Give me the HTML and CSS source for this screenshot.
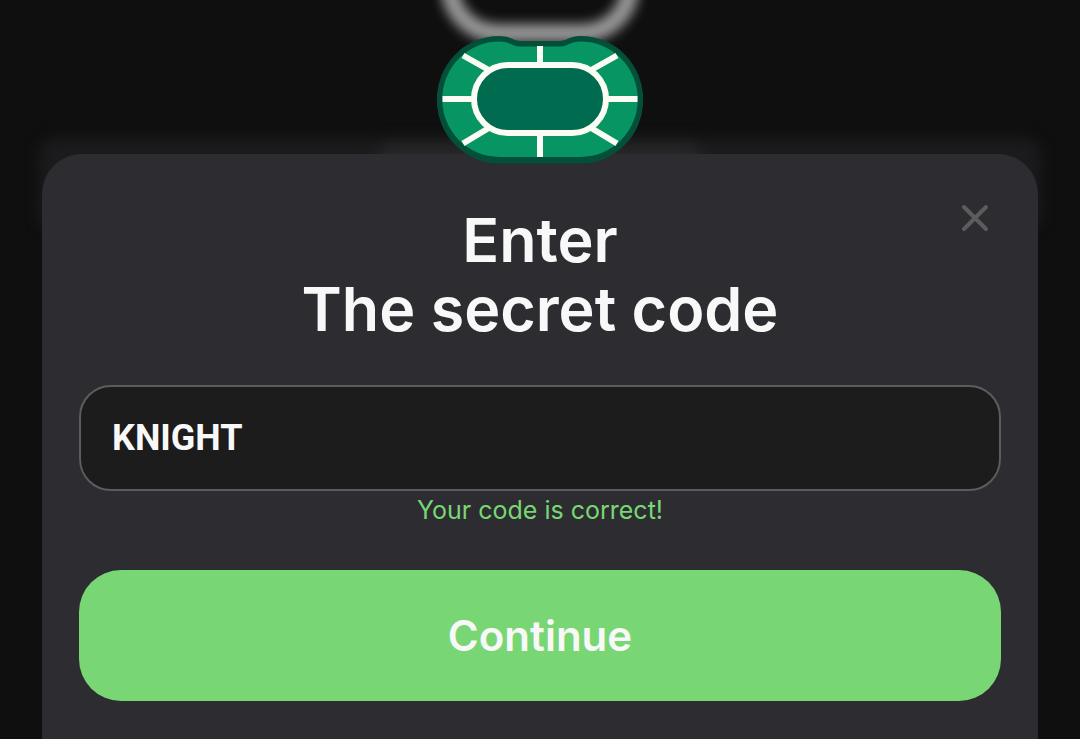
FILE: index.html
```html
<!DOCTYPE html>
<html lang="en">
<head>
    <meta charset="UTF-8">
    <meta name="viewport" content="width=device-width, initial-scale=1.0">
    <title>Enter the secret code</title>
    <link rel="stylesheet" href="styles.css">
</head>
<body>
    <!-- blurred page behind the modal -->
    <div class="backdrop" aria-hidden="true">
        <div class="backdrop-ring"></div>
        <div class="backdrop-panel">
            <div class="backdrop-tab"></div>
        </div>
    </div>

    <main class="modal">
        <svg class="table-icon" viewBox="0 0 206 128" aria-hidden="true">
            <path fill="#044f3a" d="M62 0C69 0 74 2 78 4Q81 5 84 5H122Q125 5 128 4C132 2 137 0 144 0A62 63.500 0 0 1 144 127.500H62A62 63.500 0 0 1 62 0Z"/>
            <path fill="#079564" d="M62 5.500C68 5.500 72 7 76 9Q79 10.500 83 10.500H123Q127 10.500 130 9C134 7 138 5.500 144 5.500A56.500 57.500 0 0 1 144 121H62A56.500 57.500 0 0 1 62 5.500Z"/>
            <g fill="none" stroke="#fbfcf3" stroke-width="6">
                <path d="M103 10V29M103 97V121M5.500 63H37M169 63H200.500M26 19.500L51 33.500M180 19.500L155 33.500M26 107.500L51 92.500M180 107.500L155 92.500"/>
                <rect x="37" y="29" width="132" height="68" rx="34" fill="#006b4e"/>
            </g>
        </svg>

        <form class="card">
            <button class="close" type="button" aria-label="Close">
                <svg viewBox="0 0 28 28" aria-hidden="true">
                    <path d="M3 3L25 25M25 3L3 25"/>
                </svg>
            </button>
            <h1><label for="code">Enter<br>The secret code</label></h1>
            <input class="code" id="code" type="text" value="KNIGHT" autocomplete="off" spellcheck="false">
            <p class="message">Your code is correct!</p>
            <button class="continue" type="submit">Continue</button>
        </form>
    </main>
</body>
</html>
```
FILE: styles.css
```css
* {
    box-sizing: border-box;
}
body {
    margin: 0;
    background-color: #0f0f0f;
    color: #f8f8f8;
    font-family: Inter, sans-serif;
}

/* blurred page behind the modal */
.backdrop {
    position: fixed;
    inset: 0;
    overflow: hidden;
}
.backdrop-ring {
    position: absolute;
    top: -160px;
    left: 50%;
    width: 198px;
    height: 202px;
    margin-left: -99px;
    border: 18px solid #999;
    border-radius: 56px;
    filter: blur(6px);
}
.backdrop-panel {
    position: absolute;
    top: 138px;
    left: 39px;
    right: 39px;
    height: 92px;
    border-radius: 16px;
    background-color: #1b1b1d;
    filter: blur(7px);
}
.backdrop-tab {
    width: 324px;
    height: 80px;
    margin: 4px auto 0;
    border-radius: 16px;
    background-color: #262628;
}

.modal {
    position: relative;
    display: flex;
    flex-direction: column;
    align-items: center;
    min-height: 100vh;
    padding: 36px 42px 0;
}
.table-icon {
    position: relative;
    z-index: 1;
    width: 206px;
    height: 128px;
    margin-bottom: -10px;
}
.card {
    position: relative;
    flex: 1;
    display: flex;
    flex-direction: column;
    width: 100%;
    padding: 52px 37px 38px;
    border-radius: 40px 40px 0 0;
    background-color: #2d2c31;
}
.close {
    position: absolute;
    top: 50px;
    right: 49px;
    width: 28px;
    height: 28px;
    padding: 0;
    border: 0;
    background: none;
    cursor: pointer;
}
.close svg {
    display: block;
    fill: none;
    stroke: #5c5c5c;
    stroke-width: 4;
    stroke-linecap: round;
}
h1 {
    margin: 0 0 41px;
    font-size: 61px;
    font-weight: 600;
    line-height: 69px;
    text-align: center;
}
.code {
    width: 100%;
    height: 106px;
    padding: 0 31px;
    border: 2px solid #5c5c5c;
    border-radius: 32px;
    background-color: #1c1c1c;
    color: #f8f8f8;
    font-family: Roboto, sans-serif;
    font-size: 36px;
    font-weight: 700;
    outline: none;
}
.message {
    margin: 0 0 41px;
    color: #78d774;
    font-size: 25px;
    line-height: 38px;
    text-align: center;
}
.continue {
    width: 100%;
    height: 131px;
    border: 0;
    border-radius: 42px;
    background-color: #78d774;
    color: #f8f8f8;
    font-family: inherit;
    font-size: 42px;
    font-weight: 600;
    cursor: pointer;
}
```
